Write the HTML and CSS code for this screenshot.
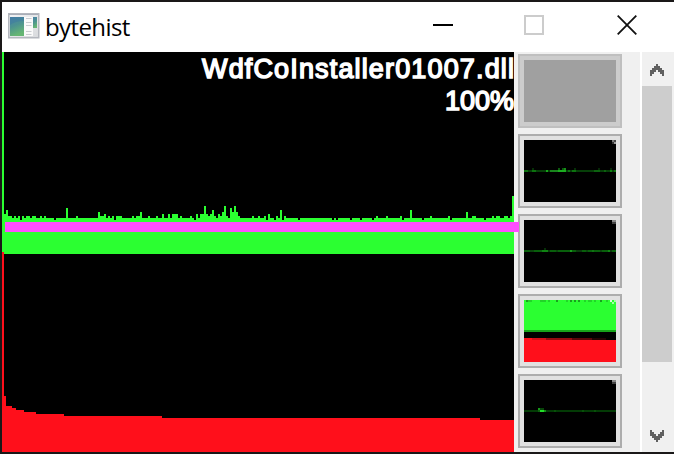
FILE: index.html
```html
<!DOCTYPE html>
<html lang="en">
<head>
<meta charset="utf-8">
<title>bytehist</title>
<link rel="stylesheet" href="styles.css">
</head>
<body>
<div class="window">
  <header class="titlebar">
    <svg class="app-icon" width="32" height="26" viewBox="0 0 32 26">
      <defs>
        <linearGradient id="pane" x1="0" y1="0" x2="0.3" y2="1"><stop offset="0" stop-color="#4b82a8"/><stop offset=".5" stop-color="#4c9291"/><stop offset="1" stop-color="#66b673"/></linearGradient>
        <linearGradient id="frame" x1="0" y1="0" x2="1" y2="1"><stop offset="0" stop-color="#f2f3f5"/><stop offset="1" stop-color="#d8dadd"/></linearGradient>
      </defs>
      <rect x=".75" y=".75" width="30" height="24" fill="url(#frame)" stroke="#b4b7be" stroke-width="1.5"/>
      <path d="M1 1.5H30" stroke="#a9aeb8"/>
      <rect x="2" y="4" width="14" height="19" fill="url(#pane)"/>
      <path d="M2 12Q7 8 16 8V4H2Z" fill="#3975a2" opacity=".4"/>
      <rect x="16" y="4" width="9" height="19" fill="#fafafa"/>
      <path d="M18 5.500h5.500M18 9.500h5.500M18 12.500h5.500M18 18.500h5.500M18 21.500h5.500" stroke="#c9ccd0"/>
      <rect x="25" y="4" width="4" height="11" fill="url(#pane)"/>
    </svg>
    <span class="title">bytehist</span>
    <div class="controls">
      <svg width="20" height="20"><path d="M0 10H20" stroke="#000" stroke-width="2"/></svg>
      <svg width="20" height="20"><rect x="1" y="1" width="18" height="18" fill="none" stroke="#ccc" stroke-width="2"/></svg>
      <svg class="close" width="20" height="20"><path d="M.7 .7L19.300 19.300M19.300 .7L.7 19.300" stroke="#111" stroke-width="1.800"/></svg>
    </div>
  </header>
  <main class="content">
    <section class="histogram">
      <svg width="512" height="400" viewBox="2 52 512 400" shape-rendering="crispEdges">
        <path id="bytes" fill="#2bff31"/>
        <path id="sorted" fill="#ff0f1b"/>
        <g class="caption">
          <text x="202" y="78" textLength="312" lengthAdjust="spacing">WdfCoInstaller01007.dll</text>
          <text x="445" y="110" textLength="69" lengthAdjust="spacing">100%</text>
        </g>
      </svg>
      <div class="marker"></div>
    </section>
    <aside class="thumbs">
      <div class="thumb selected"><div class="blank"></div></div>
      <div class="thumb"><svg id="t1" width="92" height="62"></svg></div>
      <div class="thumb"><svg id="t2" width="92" height="62"></svg></div>
      <div class="thumb"><svg id="t3" width="92" height="62"></svg></div>
      <div class="thumb"><svg id="t4" width="92" height="62"></svg></div>
    </aside>
    <div class="scrollbar">
      <svg class="arrow" width="32" height="34" shape-rendering="crispEdges"><path d="M8 18h2v-2h2v-2h2v-2h2v2h2v2h2v2h2v6h-2v-2h-2v-2h-2v-2h-2v2h-2v2h-2v2h-2z"/></svg>
      <div class="handle"></div>
      <svg class="arrow" width="32" height="34" shape-rendering="crispEdges"><path d="M8 12h2v2h2v2h2v2h2v-2h2v-2h2v-2h2v6h-2v2h-2v2h-2v2h-2v-2h-2v-2h-2v-2h-2z"/></svg>
    </div>
  </main>
</div>
<script src="chart.js"></script>
</body>
</html>
```
FILE: styles.css
```css
body { margin: 0; background: #1a1818; overflow: hidden; }
.window { box-sizing: border-box; width: 674px; height: 454px; padding: 2px 0 2px 2px; background: #1a1818; }
.titlebar { display: flex; align-items: center; height: 50px; background: #fff; padding-left: 6px; box-sizing: border-box; }
.app-icon { flex: none; margin-top: -2px; }
.title { margin-left: 5px; font: 24px/32px "Open Sans", "Noto Sans", sans-serif; letter-spacing: -0.6px; color: #000; white-space: nowrap; }
.controls { display: flex; gap: 71px; margin-left: auto; margin-right: 37px; margin-top: -4px; }
.close { margin-left: 2px; }
.content { display: flex; height: 400px; }
.histogram { position: relative; width: 512px; height: 400px; background: #000; flex: none; }
svg { display: block; }
.caption { fill: #fff; stroke: #fff; stroke-width: 1.5; font: 27px "Liberation Sans", Arial, sans-serif; }
.marker { position: absolute; left: 3px; top: 170px; width: 514px; height: 10px; background: #ff4cff; z-index: 1; }
.thumbs { display: flex; flex-direction: column; gap: 6px; box-sizing: border-box; width: 126px; padding: 2px 0 0 4px; background: #f0f0f0; flex: none; }
.thumb { box-sizing: border-box; width: 104px; height: 74px; border: 2px solid #adadad; padding: 4px; background: #e1e1e1; flex: none; }
.thumb svg { background: #000; }
.thumb.selected { border-color: #bfbfbf; background: #ccc; }
.blank { height: 62px; background: #a0a0a0; }
.scrollbar { display: flex; flex-direction: column; width: 32px; height: 400px; background: #f0f0f0; border-left: 2px solid #fff; }
.arrow { fill: #606060; flex: none; }
.arrow:last-child { margin-top: auto; }
.handle { width: 30px; height: 276px; background: #cdcdcd; }
```
FILE: chart.js
```js
// Each pair is [start x, top y]; a level holds until the next start.
const bytes = [[2,52],[4,214],[6,210],[8,216],[12,218],[14,216],[16,218],[18,216],[20,220],[22,216],[24,218],[26,216],[30,218],[32,216],[36,218],[40,216],[42,218],[44,216],[46,218],[54,220],[56,218],[66,208],[68,218],[76,216],[78,218],[98,212],[100,216],[104,214],[106,218],[108,216],[110,218],[112,216],[114,220],[116,216],[122,218],[132,216],[134,218],[136,216],[140,212],[142,218],[148,216],[150,218],[156,216],[158,218],[162,214],[164,218],[168,214],[170,218],[172,214],[178,218],[180,216],[182,218],[190,216],[192,218],[194,220],[196,214],[198,218],[200,214],[204,206],[206,214],[208,216],[210,214],[212,210],[214,216],[216,218],[218,214],[220,216],[222,212],[224,206],[226,216],[228,218],[230,208],[232,212],[234,206],[236,212],[238,216],[240,218],[252,216],[254,218],[258,216],[260,218],[264,216],[266,220],[268,214],[270,218],[274,220],[276,216],[278,218],[280,210],[282,220],[284,216],[286,218],[298,220],[300,218],[332,220],[334,218],[336,220],[338,218],[350,220],[352,218],[360,220],[362,218],[372,220],[374,218],[376,216],[378,218],[386,216],[388,218],[400,216],[402,220],[404,218],[410,210],[412,218],[422,220],[424,218],[430,216],[432,218],[448,216],[450,220],[452,218],[466,212],[468,218],[472,216],[476,218],[484,220],[486,218],[492,216],[494,218],[496,216],[500,218],[504,216],[508,218],[510,216],[512,196]];
const sorted = [[2,252],[4,396],[6,406],[12,408],[16,410],[24,412],[36,414],[64,416],[162,418],[480,420]];

function steps(levels, base) {
  return `M2 ${base}` + levels.map(([x, y]) => `H${x}V${y}`).join("") + `H514V${base}Z`;
}
document.getElementById("bytes").setAttribute("d", steps(bytes, 254));
document.getElementById("sorted").setAttribute("d", steps(sorted, 452));

// Thumbnail cells: [x, y, width, height, colour]
const corner = [[88,0,4,2,"#888"],[88,2,4,2,"#444"]];
const thumbs = {
  t1: [[0,30,92,2,"#063f08"],[0,30,4,2,"#0c720f"],[8,30,4,2,"#0c720f"],[8,28,2,2,"#053006"],[22,30,2,2,"#19a51d"],[26,30,8,2,"#19851d"],[34,30,8,2,"#1cad20"],[34,28,2,2,"#0b5c0d"],[38,28,4,2,"#0b5c0d"],[40,28,2,2,"#149117"],[44,30,2,2,"#0c720f"],[48,30,4,2,"#0c720f"],[50,28,2,2,"#053006"],[70,30,6,2,"#0c620f"],[74,28,2,2,"#052806"],[80,30,2,2,"#0c620f"],[86,28,2,2,"#052806"],[86,30,2,2,"#0c820f"],[90,30,2,2,"#0c720f"],[88,0,2,2,"#777"],[90,0,2,2,"#444"],[88,2,2,2,"#333"],[90,2,2,2,"#999"]],
  t2: [[0,30,92,2,"#085f0b"],[6,30,4,2,"#0a430c"],[18,30,6,2,"#0f8312"],[24,30,2,2,"#0a380c"],[20,28,2,2,"#053006"],[32,30,2,2,"#0a430c"],[46,30,2,2,"#1a971d"],[52,30,6,2,"#0a380c"],[62,30,2,2,"#0a430c"],[68,30,2,2,"#0f7312"],[76,30,2,2,"#0a430c"],[84,30,2,2,"#0f8312"],[86,30,2,2,"#0a380c"],...corner],
  t3: [[0,0,92,30,"#2bff31"],[2,0,2,2,"#1a9f1e"],[4,0,4,2,"#22d428"],[16,0,6,2,"#22d428"],[24,0,2,2,"#22d428"],[32,0,2,2,"#1a9f1e"],[42,0,2,2,"#22d428"],[46,0,2,2,"#1a9f1e"],[50,0,2,2,"#1a9f1e"],[54,0,2,2,"#1a9f1e"],[60,0,2,2,"#22d428"],[64,0,4,2,"#22d428"],[70,0,2,2,"#22d428"],[76,0,2,2,"#1a9f1e"],[82,0,2,2,"#22d428"],[86,0,2,2,"#d9ffda"],[88,2,2,2,"#a5ffa8"],[90,0,2,2,"#a5ffa8"],[0,30,92,2,"#16a51a"],[0,40,92,22,"#ff0f1b"],[0,38,8,2,"#ff0f1b"],[8,38,14,2,"#d20e17"],[22,38,26,2,"#960a10"],[48,38,20,2,"#5c060a"],[68,38,14,2,"#230304"]],
  t4: [[0,30,92,2,"#033b05"],[14,28,2,2,"#159719"],[16,28,4,2,"#064508"],[14,30,2,2,"#0b600d"],[16,30,4,2,"#24df29"],[20,30,2,2,"#129016"],[30,30,2,2,"#075109"],[58,30,2,2,"#075109"],[70,30,2,2,"#075109"],...corner]
};
for (const [id, cells] of Object.entries(thumbs)) {
  document.getElementById(id).innerHTML = cells
    .map(([x, y, w, h, c]) => `<rect x="${x}" y="${y}" width="${w}" height="${h}" fill="${c}"/>`).join("");
}
```
